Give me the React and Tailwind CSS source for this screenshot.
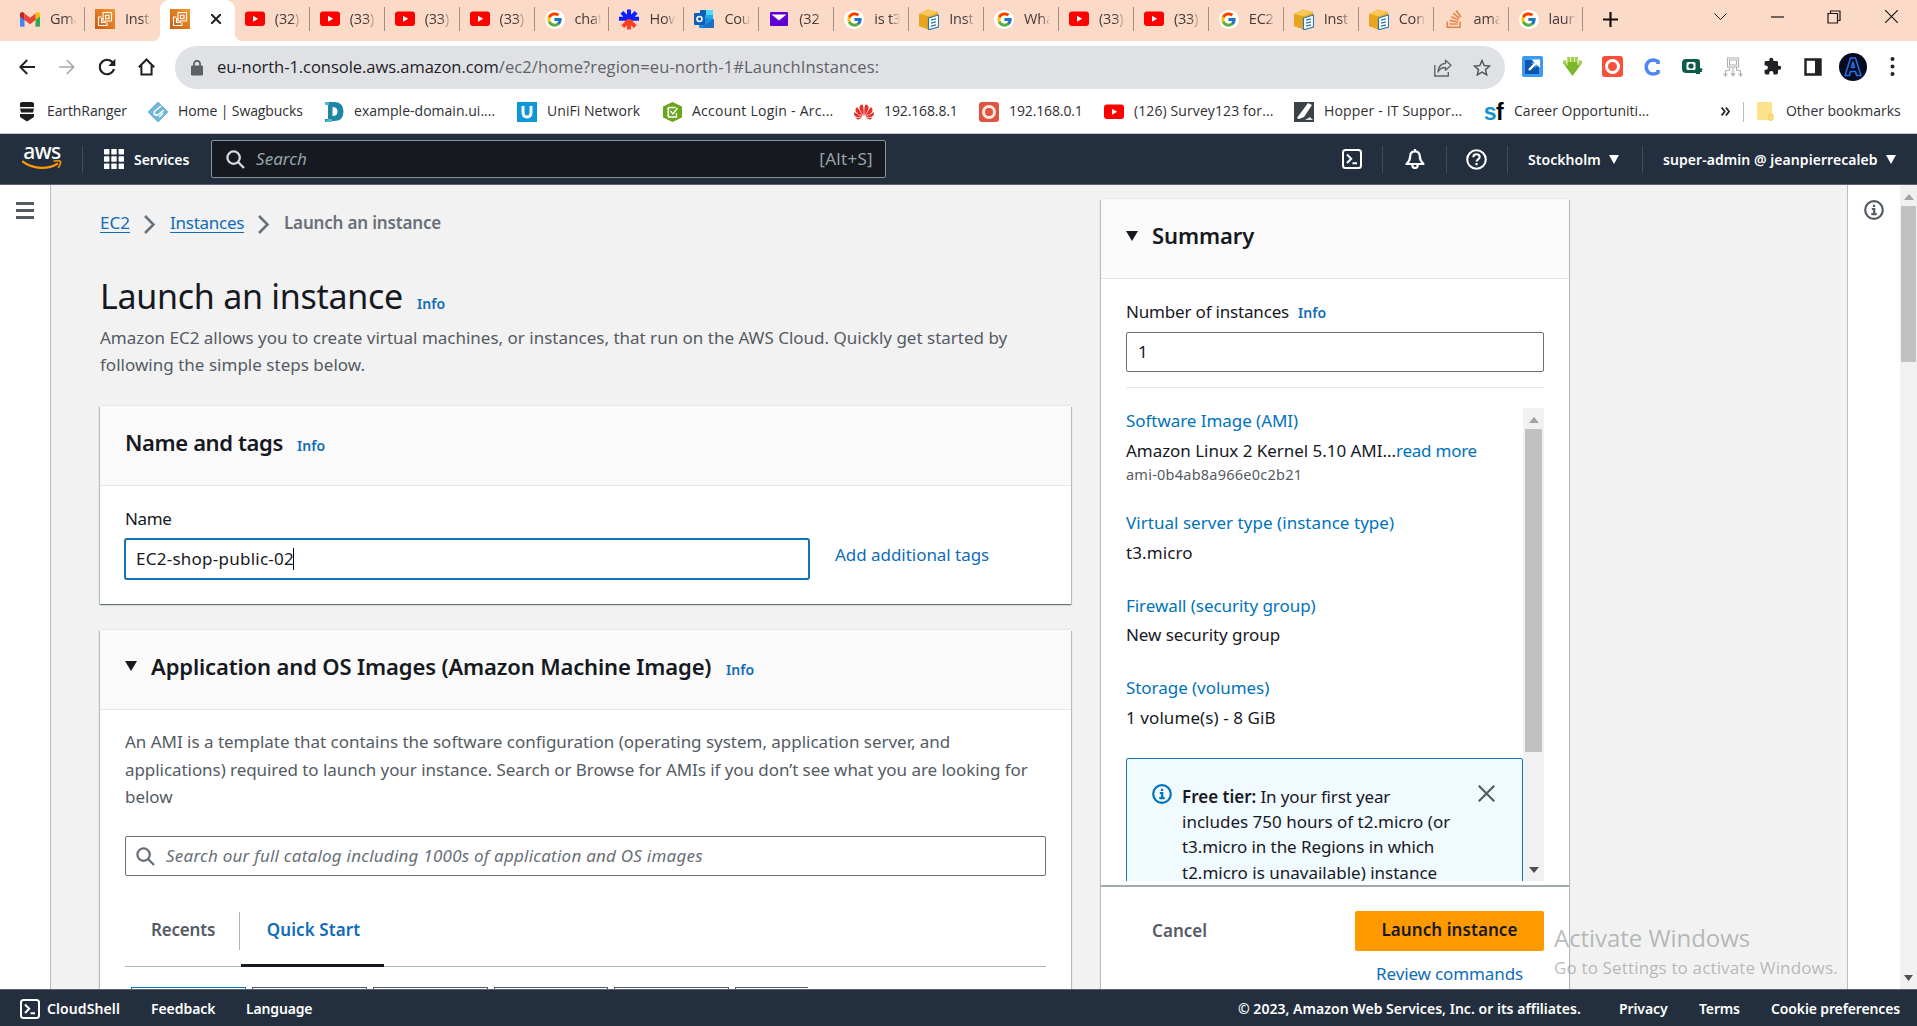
import { FcGoogle } from "react-icons/fc";
import { SiHuawei, SiStackoverflow } from "react-icons/si";

/* ---------- icons ---------- */
const YouTube = () => (
  <svg width="20" height="16" viewBox="0 0 20 16">
    <rect y="0.6" width="20" height="14.4" rx="3" fill="#f00" />
    <path d="M8 4.8v6l5.2-3z" fill="#fff" />
  </svg>
);
const Google = () => (
  <span className="flex h-[19px] w-5 items-center justify-center rounded-full bg-white">
    <FcGoogle size={17} />
  </span>
);
const Gmail = () => (
  <svg width="20" height="15" viewBox="0 0 20 15">
    <path d="M0 2v11.500q0 1.200 1.200 1.200h3.300V6z" fill="#4285f4" />
    <path d="M20 2v11.500q0 1.200-1.200 1.200h-3.300V6z" fill="#34a853" />
    <path d="M15.500 1.500V8L20 4.500V2.300c0-2-2.200-2.900-3.600-1.700z" fill="#fbbc04" />
    <path d="M0 2.300v2.200L4.500 8V1.500L3.600.6C2.200-.6 0 .3 0 2.300z" fill="#c5221f" />
    <path d="M4.500 8V1.500L10 5.800l5.500-4.300V8L10 12.200z" fill="#ea4335" />
  </svg>
);
const Ec2 = () => (
  <svg width="20" height="20" viewBox="0 0 20 20">
    <defs>
      <linearGradient id="ec2" x1="0" y1="1" x2="1" y2="0">
        <stop offset="0" stopColor="#cf5a14" />
        <stop offset="1" stopColor="#f19a2c" />
      </linearGradient>
    </defs>
    <rect width="20" height="20" fill="url(#ec2)" />
    <g fill="none" stroke="#fff" strokeWidth="1.100" strokeLinejoin="round">
      <path d="M8 3.500h8.500V12H8z" />
      <path d="M10.500 6.200h3.500v3.500h-3.500z" />
      <path d="M6.500 8h-3v8.500H12v-3" />
      <path d="M8.500 9.500H6.500v4h4v-1.500" />
    </g>
  </svg>
);
const Burst = () => (
  <svg width="21" height="21" viewBox="0 0 21 21" strokeWidth="4.200">
    <path d="M10.500 10.500V0M10.500 10.500L3 3M10.500 10.500L18 3M10.500 9.600H0M10.500 9.600H21" stroke="#0a1fff" />
    <path d="M10.500 10V21M10.500 11.500L4 18M10.500 11.500L17 18" stroke="#ff3d1f" />
  </svg>
);
const Outlook = () => (
  <svg width="20" height="20" viewBox="0 0 20 20">
    <path d="M6 1h13v10H6z" fill="#28a8ea" />
    <path d="M12 1h7v5h-7z" fill="#50d9ff" />
    <path d="M6 1h6v5H6z" fill="#0364b8" />
    <path d="M5 9l15 1v8q0 1-1 1H6q-1 0-1-1z" fill="#1490df" />
    <path d="M20 10v8q0 1-1 1H7z" fill="#1a6fc4" />
    <rect y="4" width="11" height="12" rx="1" fill="#0f5fb8" />
    <circle cx="5.500" cy="10" r="2.500" fill="none" stroke="#fff" strokeWidth="1.600" />
  </svg>
);
const Mail = () => (
  <svg width="18" height="14" viewBox="0 0 18 14">
    <rect width="18" height="14" rx="1" fill="#5f01d1" />
    <path d="M1.500 2.500h15L9 8.500z" fill="#fff" />
  </svg>
);
const BoxDoc = () => (
  <svg width="20" height="21" viewBox="0 0 20 21">
    <path d="M0 5L9 .5 19 3v13l-9 4.500L0 17z" fill="#f0ab1e" />
    <path d="M0 5l10 2.500L19 3 9 .5z" fill="#f8c657" />
    <path d="M10 7.500v13L0 17V5z" fill="#e9a41f" />
    <path d="M9.500 9L19.500 6v12L9.500 20.800z" fill="#fff" stroke="#2c78a8" strokeWidth="1.200" />
    <path d="M12 11.200l5-1.400M12 14.200l5-1.400M12 17.200l5-1.400" stroke="#2c78a8" strokeWidth="1.400" />
  </svg>
);
const Stack = () => <SiStackoverflow size={18} color="#e6854a" />;

const svg = { fill: "none", stroke: "currentColor" };
const Back = () => (
  <svg width="16" height="16" viewBox="0 0 16 16" {...svg} strokeWidth="1.900"><path d="M16 8H1.500M8.200 1L1.300 8l6.900 7" /></svg>
);
const Forward = () => (
  <svg width="16" height="16" viewBox="0 0 16 16" {...svg} strokeWidth="1.700"><path d="M0 8h14.500M7.800 1l6.900 7-6.900 7" /></svg>
);
const Reload = () => (
  <svg width="18" height="18" viewBox="0 0 18 18">
    <path d="M15.600 6A7.200 7.200 0 1 0 16 11" fill="none" stroke="#1f2023" strokeWidth="2.100" />
    <path d="M17.300.8v7.200h-7z" fill="#1f2023" />
  </svg>
);
const HomeIcon = () => (
  <svg width="17" height="18" viewBox="0 0 17 18" fill="none" stroke="#1f2023" strokeWidth="2"><path d="M.8 9.200L8.500 1.500l7.700 7.700M3.400 7.500V16.500h10.200V7.500" /></svg>
);
const Lock = () => (
  <svg width="12" height="16" viewBox="0 0 12 16">
    <rect y="5.500" width="12" height="10" rx="1.300" fill="#5c5f64" />
    <path d="M3 6V3.800a3 3 0 0 1 6 0V6" fill="none" stroke="#5c5f64" strokeWidth="1.700" />
  </svg>
);
const Share = () => (
  <svg width="18" height="18" viewBox="0 0 18 18" fill="none" stroke="#5f6368" strokeWidth="1.400">
    <path d="M.8 6v11h13.500V13" />
    <path d="M11.500 1.200l5.500 5-5.500 5V8.500C8 8.500 5.500 9.800 4 13c.3-5 3-8.200 7.500-8.800z" strokeLinejoin="round" />
  </svg>
);
const Star = () => (
  <svg width="18" height="17" viewBox="0 0 18 17" fill="none" stroke="#55585d" strokeWidth="1.500"><path d="M9 1.500l2.200 5 5.400.5-4.100 3.600 1.200 5.300L9 13.100l-4.700 2.800 1.200-5.300L1.400 7l5.400-.5z" /></svg>
);
const Search = ({ color }) => (
  <svg width="19" height="19" viewBox="0 0 19 19" fill="none" stroke={color} strokeWidth="2.300"><circle cx="7.600" cy="7.600" r="6.200" /><path d="M12 12l6 6" /></svg>
);
const Shell = () => (
  <svg width="20" height="20" viewBox="0 0 20 20" fill="none" stroke="#fff" strokeWidth="2"><rect x="1" y="1" width="18" height="18" rx="2.500" /><path d="M5 5.500l4.200 4.300L5 14M10.500 14.200H15" /></svg>
);
const Bell = () => (
  <svg width="20" height="20" viewBox="0 0 20 20" fill="none" stroke="#fff" strokeWidth="2.200" strokeLinejoin="round"><path d="M10 2.300c-3.500 0-4.800 2.300-4.800 5.300 0 3.500-1.200 5-3.700 7.400h17c-2.500-2.400-3.700-3.900-3.700-7.400 0-3-1.300-5.300-4.800-5.300zM10 0v2.500M7.300 16c0 4 5.400 4 5.400 0" /></svg>
);
const Help = () => (
  <svg width="21" height="21" viewBox="0 0 21 21" fill="none" stroke="#fff" strokeWidth="2.100"><circle cx="10.500" cy="10.500" r="9.300" /><path d="M7.300 8.300c0-4.200 6.400-4 6.400-.3 0 2.300-3.100 2.300-3.100 4.600M10.500 14v2.200" /></svg>
);
const Info = ({ color }) => (
  <svg width="20" height="20" viewBox="0 0 20 20" fill="none" stroke={color} strokeWidth="2.200"><circle cx="10" cy="10" r="8.800" /><path d="M10 4.800v2.200M7.800 9h2.400v5M7.300 14.200h5.400" /></svg>
);
const Down = ({ w, h, color }) => (
  <svg width={w} height={h} viewBox="0 0 10 8" preserveAspectRatio="none"><path d="M0 0h10L5 8z" fill={color} /></svg>
);
const Up = () => (
  <svg width="10" height="6" viewBox="0 0 10 6"><path d="M0 6h10L5 0z" fill="#a3a3a3" /></svg>
);
const Chevron = () => (
  <svg width="12" height="19" viewBox="0 0 12 19" fill="none" stroke="#687078" strokeWidth="2.500"><path d="M1 1l8.500 8.500L1 18" /></svg>
);

/* ---------- browser chrome ---------- */
const tabs = [
  [Gmail, "Gma"], [Ec2, "Insta"], null, [YouTube, "(32)"], [YouTube, "(33)"], [YouTube, "(33)"], [YouTube, "(33)"],
  [Google, "chat"], [Burst, "How"], [Outlook, "Cou"], [Mail, "(32"], [Google, "is t3"], [BoxDoc, "Inst"],
  [Google, "Wha"], [YouTube, "(33)"], [YouTube, "(33)"], [Google, "EC2"], [BoxDoc, "Inst"], [BoxDoc, "Con"],
  [Stack, "ama"], [Google, "laun"],
];

function Tab({ icon: Icon, label, divider }) {
  return (
    <div className="flex h-[38px] w-[74.930px] shrink-0 items-center pl-[10px]">
      <span className="flex w-5 shrink-0 justify-center"><Icon /></span>
      <span className="ml-[10px] w-[27px] overflow-hidden text-[14.500px] tracking-[-0.200px] whitespace-nowrap text-[#45393a] [mask-image:linear-gradient(to_right,#000_60%,transparent_98%)]">
        {label}
      </span>
      {divider && <span className="ml-auto h-6 w-px bg-[#a18e86]" />}
    </div>
  );
}

function TabBar() {
  return (
    <div className="flex h-[41px] bg-[#fcdac8] pl-[10px]">
      {tabs.map((t, i) =>
        t ? (
          <Tab key={i} icon={t[0]} label={t[1]} divider={i !== 1} />
        ) : (
          <div key={i} className="relative flex h-[41px] w-[75px] shrink-0 items-center rounded-t-[9px] bg-white pb-[3px] pl-[10px]">
            <span className="absolute bottom-0 left-[-8px] h-2 w-2 bg-[radial-gradient(circle_at_0_0,transparent_8px,#fff_8.500px)]" />
            <span className="absolute right-[-8px] bottom-0 h-2 w-2 bg-[radial-gradient(circle_at_100%_0,transparent_8px,#fff_8.500px)]" />
            <Ec2 />
            <svg className="ml-[21px]" width="10" height="10" viewBox="0 0 10 10" stroke="#222" strokeWidth="2"><path d="M0 0l10 10M10 0L0 10" /></svg>
          </div>
        )
      )}
      <div className="flex h-[38px] flex-1 items-center">
        <svg className="ml-[20px]" width="15" height="15" viewBox="0 0 15 15" stroke="#111" strokeWidth="2.200"><path d="M7.500 0v15M0 7.500h15" /></svg>
        <div className="mb-[5px] ml-auto flex items-center pr-[19px] text-[#1c1614]">
          <svg width="13" height="7" viewBox="0 0 13 7" {...svg} strokeWidth="1"><path d="M.5.500l6 6 6-6" /></svg>
          <svg className="ml-[44px]" width="13" height="2" viewBox="0 0 13 2" {...svg} strokeWidth="1.200"><path d="M0 1h13" /></svg>
          <svg className="ml-[43px]" width="14" height="14" viewBox="0 0 14 14" {...svg} strokeWidth="1.200"><path d="M1 3.500h9.500V13H1zM3.500 3.500V1H13v9.500h-2.500" /></svg>
          <svg className="ml-[44px]" width="13" height="13" viewBox="0 0 13 13" {...svg} strokeWidth="1.200"><path d="M0 0l13 13M13 0L0 13" /></svg>
        </div>
      </div>
    </div>
  );
}

const extensions = [
  <svg width="21" height="21" viewBox="0 0 21 21"><rect width="21" height="21" rx="2" fill="#3b9bf3" /><path d="M3 4h9l-3 4h4v4l4-3v9H3z" fill="#0d56a8" /><path d="M7 14l8-8" stroke="#fff" strokeWidth="2.400" /><path d="M9.500 3.500H18V12z" fill="#fff" /></svg>,
  <svg width="19" height="20" viewBox="0 0 19 20"><path d="M4.500 0h10v6H19L9.500 19 0 6h4.500z" fill="#7cb82a" /><path d="M0 4l3.500-1V9L0 6zM19 4l-3.500-1V9L19 6zM4.500 0h10v5h-10z" fill="#a0d04e" /><path d="M4 2v6M15 2v6M7.500 0v5M11.500 0v5" stroke="#e6f5cf" strokeWidth=".9" /></svg>,
  <svg width="21" height="21" viewBox="0 0 21 21"><rect width="21" height="21" rx="3" fill="#fa4f38" /><circle cx="10.500" cy="10.500" r="6" fill="none" stroke="#fff" strokeWidth="3" /></svg>,
  <svg width="16" height="18" viewBox="0 0 16 18"><path d="M14 6V3.500A10 10 0 0 0 9 2C0 2-0 16 9 16a10 10 0 0 0 5-1.500V12" fill="none" stroke="#4f86f7" strokeWidth="3.600" /></svg>,
  <svg width="21" height="17" viewBox="0 0 21 17"><path d="M4 1h11q3 0 3 3v6l3 1-1.500 1.500 1 1.500h-2.500v2h-4v-1H4q-4 0-4-4V5q0-4 4-4z" fill="#0f5a4c" /><rect x="4.500" y="4" width="9" height="8" rx="1.500" fill="#fff" /><circle cx="9" cy="8" r="2.600" fill="#0f5a4c" /></svg>,
  <svg width="20" height="20" viewBox="0 0 20 20" fill="none" stroke="#b0b0b0" strokeWidth="1.100"><path d="M4.500 1h11v9h-11zM6.500 3h7v5h-7zM10 10v8M6.500 10v3L2.500 14v5M13.500 10v3l4 1v5M8 16l2 3 2-3M.5 16.500L2.500 19l2-2.500M15.500 16.500l2 2.500 2-2.500" /></svg>,
  <svg width="19" height="19" viewBox="0 0 24 24"><path d="M20.500 11H19V7c0-1.100-.9-2-2-2h-4V3.500a2.500 2.500 0 0 0-5 0V5H4c-1.100 0-2 .9-2 2v3.800h1.500a2.700 2.700 0 0 1 0 5.400H2V20c0 1.100.9 2 2 2h3.800v-1.500a2.700 2.700 0 0 1 5.400 0V22H17c1.100 0 2-.9 2-2v-4h1.500a2.500 2.500 0 0 0 0-5z" fill="#202124" /></svg>,
  <svg width="18" height="18" viewBox="0 0 18 18"><path d="M1.500 1.500h15v15h-15z" fill="#fff" stroke="#202124" strokeWidth="2.400" /><path d="M11 1h6v16h-6z" fill="#202124" /></svg>,
  <svg width="28" height="28" viewBox="0 0 28 28"><circle cx="14" cy="14" r="14" fill="#050b20" /><path d="M6 22.500L11.500 5h5L22 22.500h-4.500l-1-4h-5l-1 4zM12.500 14.500h3L14 9z" fill="none" stroke="#2372e8" strokeWidth="1.500" strokeLinejoin="round" /></svg>,
];

function Toolbar() {
  return (
    <div className="flex h-[51px] items-center bg-white pt-[1px] pb-[1px]">
      <div className="flex w-[175px] shrink-0 items-center pl-[19px] text-[#1f2023]">
        <span className="w-[40px]"><Back /></span>
        <span className="w-[39px] text-[#a7a9ac]"><Forward /></span>
        <span className="w-[40px]"><Reload /></span>
        <HomeIcon />
      </div>
      <div className="mt-[2px] flex h-[43px] w-[1330px] items-center rounded-full bg-[#e0e1e4] pr-[14px] pl-[16px]">
        <Lock />
        <span className="ml-[14px] text-[16.500px] tracking-[-0.040px] whitespace-nowrap text-[#202124]">
          eu-north-1.console.aws.amazon.com<span className="tracking-[0.120px] text-[#5f6368]">/ec2/home?region=eu-north-1#LaunchInstances:</span>
        </span>
        <span className="ml-auto"><Share /></span>
        <span className="ml-[21px]"><Star /></span>
      </div>
      <div className="ml-[7px] flex items-center">
        {extensions.map((e, i) => (
          <span key={i} className="flex w-[40.100px] justify-center">{e}</span>
        ))}
        <svg className="ml-[17px]" width="5" height="21" viewBox="0 0 5 21" fill="#202124"><circle cx="2.500" cy="3" r="2" /><circle cx="2.500" cy="10.500" r="2" /><circle cx="2.500" cy="18" r="2" /></svg>
      </div>
    </div>
  );
}

const bookmarks = [
  ["w-[131px]", "tracking-[-0.100px]", "EarthRanger",
    <svg width="16" height="20" viewBox="0 0 16 20" fill="#1d1d1d"><path d="M1 1l2-1h10l2 1v4H1zM1 6.500h14l-1 4H2zM1 12h14v3l-7 4.500L1 15z" /></svg>],
  ["w-[176px]", "tracking-[-0.100px]", "Home | Swagbucks",
    <svg width="20" height="20" viewBox="0 0 20 20"><path d="M10 0l10 10-10 10L0 10z" fill="#6fb8d8" stroke="#6fb8d8" strokeLinejoin="round" /><path d="M13 4L7 9q-2 2 0 3.500t4-.5l5-4M15 11l-4 4" fill="none" stroke="#fff" strokeWidth="1.600" /></svg>],
  ["w-[193px]", "tracking-[0.020px]", "example-domain.ui....",
    <svg width="19" height="20" viewBox="0 0 19 20"><path d="M0 0h9q9.500 0 9.500 9.500T9 19H6v1H0V17h3V3H0zM7.500 5v9q5 0 5-4.500T7.500 5z" fill="#1f86a5" fillRule="evenodd" /><path d="M0 0h4v3H0zM3 17h4v3H0" fill="#56b7c8" /></svg>],
  ["w-[145px]", "tracking-[0.050px]", "UniFi Network",
    <svg width="20" height="20" viewBox="0 0 20 20"><rect width="20" height="20" fill="#0d96d8" /><path d="M6 4v6q0 5 4 5t4-5V4" fill="none" stroke="#fff" strokeWidth="3" /></svg>],
  ["w-[192px]", "tracking-[0.250px]", "Account Login - Arc...",
    <svg width="19" height="20" viewBox="0 0 19 20"><path d="M9.500 0L19 4.500v11L9.500 20 0 15.500v-11z" fill="#6ba51c" /><path d="M13.500 11v4h-8V5.500h7M7.500 9l2.500 3 4.500-6M4 7h2M4 10h2M4 13h2" fill="none" stroke="#fff" strokeWidth="1.300" /></svg>],
  ["w-[125px]", "tracking-[-0.120px]", "192.168.8.1", <SiHuawei size={20} color="#e4322b" />],
  ["w-[125px]", "tracking-[-0.120px]", "192.168.0.1",
    <svg width="20" height="20" viewBox="0 0 20 20"><rect width="20" height="20" rx="3" fill="#df5340" /><circle cx="10" cy="10" r="5.500" fill="none" stroke="#ffe9e0" strokeWidth="3" /></svg>],
  ["w-[190px]", "tracking-[0.100px]", "(126) Survey123 for...", <YouTube />],
  ["w-[190px]", "tracking-[0.160px]", "Hopper - IT Suppor...",
    <svg width="20" height="20" viewBox="0 0 20 20"><rect width="20" height="20" fill="#3b4248" /><path d="M14 1l4 2-8 12-5 2-2-1z" fill="#fff" /><path d="M11 18h8l-3-3z" fill="#dfe3e6" /></svg>],
  ["w-[220px]", "tracking-[0.020px]", "Career Opportuniti...",
    <span className="-ml-[1px] font-['Liberation_Sans'] text-[23px] leading-5 font-bold tracking-[-0.500px] text-[#1592d0]">s<span className="text-black">f</span></span>],
];

function Bookmarks() {
  return (
    <div className="flex h-[42px] items-center border-b border-[#c3c7cb] bg-white pb-[2px] pl-[17px] text-[14px] whitespace-nowrap text-[#2f3033]">
      {bookmarks.map(([w, tr, label, icon]) => (
        <div key={label} className={`flex shrink-0 items-center ${w}`}>
          <span className="flex w-5 shrink-0 justify-center">{icon}</span>
          <span className={`mb-[2px] ml-[10px] ${tr}`}>{label}</span>
        </div>
      ))}
      <svg className="ml-[17px]" width="9" height="9" viewBox="0 0 9 9" fill="none" stroke="#222" strokeWidth="1.700"><path d="M.6.600l3.200 3.900L.6 8.400M4.900.600l3.200 3.900-3.200 3.900" /></svg>
      <span className="ml-[13px] h-5 w-px bg-[#b9bcbf]" />
      <svg className="ml-[13px]" width="17" height="19" viewBox="0 0 17 19"><rect width="15" height="18" rx="1" fill="#fde28d" /><path d="M12 18v-5l2-1.500L16 13v4l-2 1.500z" fill="#fde28d" stroke="#f0c94f" /></svg>
      <span className="mb-[2px] ml-[12px] tracking-[-0.020px]">Other bookmarks</span>
    </div>
  );
}

/* ---------- console ---------- */
const Bar = ({ className }) => <span className={`h-[27px] w-px bg-[#414d5c] ${className}`} />;

function Nav() {
  return (
    <div className="flex h-[51px] items-center border-b border-[#5a636c] bg-[#232f3e] text-[14px] font-semibold text-white">
      <div className="ml-[22px] flex h-[50px] w-[40px] flex-col items-center">
        <span className="mt-[5px] h-[21px] text-[21px] leading-[24px] font-medium tracking-[-0.600px]">aws</span>
        <svg width="40" height="10" viewBox="0 0 40 10"><path d="M0 1.200C11 9.500 25 10 36 3.500" fill="none" stroke="#f90" strokeWidth="2.200" /><path d="M31.500 1.300q4-1 7 0 .5 3-2.200 6.500" fill="none" stroke="#f90" strokeWidth="1.600" /></svg>
      </div>
      <Bar className="ml-[20px]" />
      <svg className="ml-[21px]" width="20" height="20" viewBox="0 0 20 20" fill="#fff">
        {[0, 7.300, 14.600].map((y) => [0, 7.300, 14.600].map((x) => <rect key={x + "-" + y} x={x} y={y} width="5.400" height="5.400" rx=".6" />))}
      </svg>
      <span className="ml-[10px] w-[77px] tracking-[-0.050px]">Services</span>
      <div className="flex h-[38px] w-[675px] items-center rounded-[2px] border border-[#879596] bg-[#16191f] pr-[12px] pl-[14px] text-[17px] font-normal text-[#95a5a6]">
        <Search color="#d5dbdb" />
        <span className="ml-[11px] tracking-[0.050px] italic">Search</span>
        <span className="ml-auto tracking-[0.300px]">[Alt+S]</span>
      </div>
      <span className="ml-[456px]"><Shell /></span>
      <Bar className="ml-[20px]" />
      <span className="ml-[22px]"><Bell /></span>
      <Bar className="ml-[21px]" />
      <span className="ml-[19px]"><Help /></span>
      <Bar className="ml-[20px]" />
      <span className="ml-[20px] w-[81px] tracking-[0.050px]">Stockholm</span>
      <Down w={10} h={9} color="#fff" />
      <Bar className="ml-[23px]" />
      <span className="ml-[20px] w-[223px] tracking-[0.060px] whitespace-nowrap">super-admin @ jeanpierrecaleb</span>
      <Down w={10} h={9} color="#fff" />
    </div>
  );
}

const InfoLink = ({ className = "" }) => <span className={`text-[14px] font-semibold tracking-[0.050px] text-[#0f6cb8] ${className}`}>Info</span>;

const cardShadow = "shadow-[0_1px_1px_0_rgba(0,28,36,.35),1px_1px_1px_0_rgba(0,28,36,.2),-1px_1px_1px_0_rgba(0,28,36,.2),0_-1px_0_0_#e7e7e7]";

function Main() {
  return (
    <div className="ml-[49px] w-[971px] shrink-0 pt-[24px]">
      <div className="flex h-[27.500px] items-center leading-[27.500px] text-[#0f6cb8]">
        <span className="w-[44px] underline underline-offset-[3px]">EC2</span>
        <span className="mt-1 w-[26px]"><Chevron /></span>
        <span className="w-[88px] tracking-[-0.260px] underline underline-offset-[3px]">Instances</span>
        <span className="mt-1 w-[26px]"><Chevron /></span>
        <span className="font-semibold tracking-[-0.170px] text-[#687078]">Launch an instance</span>
      </div>
      <div className="mt-[39px] flex h-[41px] items-baseline text-[#16191f]">
        <span className="w-[317px] text-[34px] leading-[41px] tracking-[-0.280px] whitespace-nowrap">Launch an instance</span>
        <InfoLink />
      </div>
      <p className="mt-[7px] mb-[27px] h-[55.500px] leading-[27.500px] whitespace-nowrap text-[#545b64]">
        Amazon EC2 allows you to create virtual machines, or instances, that run on the AWS Cloud. Quickly get started by
        <br />
        <span className="tracking-[0.020px]">following the simple steps below.</span>
      </p>

      <section className={`h-[198px] bg-white ${cardShadow}`}>
        <header className="flex h-[80px] items-center border-b border-[#e4e7e8] bg-[#fafafa] pb-[7px] pl-[25px]">
          <div className="flex items-baseline">
            <span className="w-[172px] text-[22px] font-semibold tracking-[-0.380px] text-[#16191f]">Name and tags</span>
            <InfoLink />
          </div>
        </header>
        <div className="pt-[19px] pl-[25px] leading-[27.500px] text-[#16191f]">
          <div className="tracking-[-0.350px]">Name</div>
          <div className="mt-[5px] -ml-[1px] flex h-[42px] items-center">
            <div className="flex h-[42px] w-[686px] items-center rounded-[3px] border-2 border-[#0f73bb] pl-[10px]">
              <span className="tracking-[0.250px]">EC2-shop-public-02</span>
              <span className="-ml-px h-[22px] w-px bg-black" />
            </div>
            <span className="mb-[8px] ml-[25px] tracking-[-0.040px] text-[#0f6cb8]">Add additional tags</span>
          </div>
        </div>
      </section>

      <section className={`mt-[26px] h-[420px] bg-white ${cardShadow}`}>
        <header className="flex h-[80px] items-center border-b border-[#e4e7e8] bg-[#fafafa] pb-[7px] pl-[25px]">
          <Down w={12} h={10} color="#16191f" />
          <div className="ml-[14px] flex items-baseline">
            <span className="w-[575px] text-[22px] font-semibold tracking-[-0.140px] whitespace-nowrap text-[#16191f]">Application and OS Images (Amazon Machine Image)</span>
            <InfoLink />
          </div>
        </header>
        <div className="px-[25px] pt-[18px] text-[#545b64]">
          <p className="h-[83px] leading-[27.500px] tracking-[-0.060px] whitespace-nowrap">
            <span className="tracking-[-0.020px]">An AMI is a template that contains the software configuration (operating system, application server, and</span>
            <br />
            applications) required to launch your instance. Search or Browse for AMIs if you don’t see what you are looking for
            <br />
            below
          </p>
          <div className="mt-[25px] flex h-[40px] items-center rounded-[2px] border border-[#687078] pl-[10px] text-[#687078]">
            <Search color="#687078" />
            <span className="ml-[11px] tracking-[0.230px] italic">Search our full catalog including 1000s of application and OS images</span>
          </div>
          <div className="flex h-[91px] items-stretch border-b border-[#aab7b8] pt-[16px] font-semibold">
            <span className="flex h-[76px] w-[114px] items-center pl-[26px] tracking-[-0.200px]">Recents</span>
            <span className="mt-[20px] h-[38px] w-px bg-[#aab7b8]" />
            <span className="ml-[1px] flex h-[75px] w-[143px] items-center justify-center border-b-[3px] border-[#16191f] pt-[4px] pl-[2px] tracking-[0.090px] text-[#0f6cb8]">Quick Start</span>
          </div>
          <div className="mt-[20px] flex h-5 gap-[6px] pl-[6px]">
            <span className="w-[115px] border border-b-0 border-[#0f73bb]" />
            {[0, 1, 2, 3].map((i) => <span key={i} className="w-[114.800px] border border-b-0 border-[#545b64]" />)}
            <span className="w-[73px] border-t border-l border-[#545b64]" />
          </div>
        </div>
      </section>
    </div>
  );
}

const specs = [
  ["Virtual server type (instance type)", "t3.micro", "tracking-[0.040px]", "tracking-[0.100px]"],
  ["Firewall (security group)", "New security group", "tracking-[-0.050px]", "tracking-[-0.070px]"],
  ["Storage (volumes)", "1 volume(s) - 8 GiB", "tracking-[-0.050px]", "tracking-[0.080px]"],
];

function Summary() {
  return (
    <section className={`mt-[14px] ml-[30px] h-[850px] w-[468px] shrink-0 bg-white text-[#16191f] ${cardShadow}`}>
      <header className="flex h-[80px] items-center border-b border-[#e4e7e8] bg-[#fafafa] pb-[6px] pl-[25px]">
        <Down w={12} h={10} color="#16191f" />
        <span className="ml-[14px] text-[22px] font-semibold tracking-[-0.100px]">Summary</span>
      </header>
      <div className="px-[25px] pt-[19px]">
        <div className="flex h-[27.500px] items-baseline leading-[27.500px]">
          <span className="w-[172px] tracking-[-0.180px]">Number of instances</span>
          <InfoLink />
        </div>
        <div className="mt-[6px] flex h-[40px] items-center rounded-[2px] border border-[#687078] pl-[11px]">1</div>
        <div className="mt-[15px] h-px bg-[#e4e7e8]" />
        <div className="mt-[20px] flex h-[473px] overflow-hidden">
          <div className="w-[397px] shrink-0 leading-[27.500px] whitespace-nowrap">
            <div className="-mt-[1px] tracking-[-0.050px] text-[#0073bb]">Software Image (AMI)</div>
            <div className="mt-[2.500px] flex">
              <span className="w-[270px] tracking-[-0.040px]">Amazon Linux 2 Kernel 5.10 AMI...</span>
              <span className="tracking-[-0.240px] text-[#0073bb]">read more</span>
            </div>
            <div className="-mt-[2px] h-[25px] text-[14.500px] leading-[24px] tracking-[0.240px] text-[#545b64]">ami-0b4ab8a966e0c2b21</div>
            <div className="flex flex-col gap-[25.500px] pt-[22px]">
              {specs.map(([a, b, ta, tb]) => (
                <div key={a}>
                  <div className={`text-[#0073bb] ${ta}`}>{a}</div>
                  <div className={`mt-[2px] ${tb}`}>{b}</div>
                </div>
              ))}
            </div>
            <div className="mt-[27px] flex h-[200px] rounded-[2px] border border-[#0f73bb] bg-[#f1faff] pt-[25px] pl-[25px]">
              <Info color="#0073bb" />
              <p className="ml-[10px] w-[268px] leading-[25.200px]">
                <span className="font-semibold">Free tier:</span><span className="tracking-[-0.150px]"> In your first year</span><br />
                includes 750 hours of t2.micro (or<br />
                <span className="tracking-[-0.080px]">t3.micro in the Regions in which</span><br />
                t2.micro is unavailable) instance
              </p>
              <svg className="mt-[1px] ml-[28px]" width="17" height="17" viewBox="0 0 17 17" stroke="#545b64" strokeWidth="2.200"><path d="M.8.800l15.400 15.400M16.200.800L.8 16.200" /></svg>
            </div>
          </div>
          <div className="flex w-[21px] flex-col items-center bg-[#f1f1f1]">
            <span className="flex h-[21px] items-center pt-[3px]"><Up /></span>
            <span className="h-[323px] w-[17px] bg-[#c1c1c1]" />
            <span className="mt-auto mb-[8px]"><Down w={10} h={6} color="#505050" /></span>
          </div>
        </div>
      </div>
      <div className="mt-[4px] border-t-2 border-[#879596]/80 pt-[24px] pr-[25px]">
        <div className="flex h-[40px] items-center pl-[51px] font-semibold">
          <span className="tracking-[0.050px] text-[#545b64]">Cancel</span>
          <span className="ml-auto flex h-[40px] w-[189px] items-center justify-center rounded-[2px] bg-[#ff9900] pb-[1px] tracking-[0.070px]">Launch instance</span>
        </div>
        <div className="mt-[9px] pr-[21px] text-right leading-[27.500px] tracking-[-0.120px] text-[#0f6cb8]">Review commands</div>
      </div>
    </section>
  );
}

function Footer() {
  return (
    <footer className="flex h-[37px] items-center border-t border-[#5a636c] bg-[#232f3e] pt-[1px] text-[14px] font-semibold whitespace-nowrap text-white">
      <span className="ml-[20px]"><Shell /></span>
      <span className="ml-[7px] w-[104px] tracking-[0.100px]">CloudShell</span>
      <span className="w-[95px] tracking-[-0.050px]">Feedback</span>
      <span className="tracking-[-0.150px]">Language</span>
      <span className="mr-[39px] ml-auto w-[342px] tracking-[0.030px]">© 2023, Amazon Web Services, Inc. or its affiliates.</span>
      <span className="w-[80px] tracking-[-0.100px]">Privacy</span>
      <span className="w-[72px] tracking-[-0.150px]">Terms</span>
      <span className="w-[146px] tracking-[-0.130px]">Cookie preferences</span>
    </footer>
  );
}

export default function App() {
  return (
    <div className="relative flex h-[1026px] w-[1917px] flex-col overflow-hidden bg-[#f2f2f2] font-['Noto_Sans',sans-serif] text-[17px]">
      <div className="font-['Open_Sans',sans-serif]">
        <TabBar />
        <Toolbar />
        <Bookmarks />
      </div>
      <Nav />
      <div className="flex h-[804px] overflow-hidden">
        <div className="flex w-[51px] shrink-0 flex-col items-start gap-[4px] border-r border-[#b9bfc2] bg-white pt-[17px] pl-[16px]">
          {[0, 1, 2].map((i) => <span key={i} className="h-[3px] w-[18px] bg-[#545b64]" />)}
        </div>
        <Main />
        <Summary />
        <div className="ml-auto flex w-[53px] shrink-0 justify-center border-l border-[#b9bfc2] bg-white pt-[15px] pr-[1px]"><Info color="#545b64" /></div>
        <div className="flex w-[17px] shrink-0 flex-col items-center bg-[#f1f1f1]">
          <span className="flex h-[21px] items-center pt-[2px]"><Up /></span>
          <span className="h-[156px] w-[15px] bg-[#c1c1c1]" />
          <span className="mt-auto mb-[8px]"><Down w={9} h={6} color="#505050" /></span>
        </div>
      </div>
      <Footer />
      <div className="absolute top-[921px] left-[1554px] font-['Open_Sans',sans-serif] whitespace-nowrap text-[#8b8f90]/60">
        <div className="text-[24px] leading-[34px] tracking-[-0.050px]">Activate Windows</div>
        <div className="text-[17px] leading-[25px] tracking-[0.150px]">Go to Settings to activate Windows.</div>
      </div>
    </div>
  );
}
